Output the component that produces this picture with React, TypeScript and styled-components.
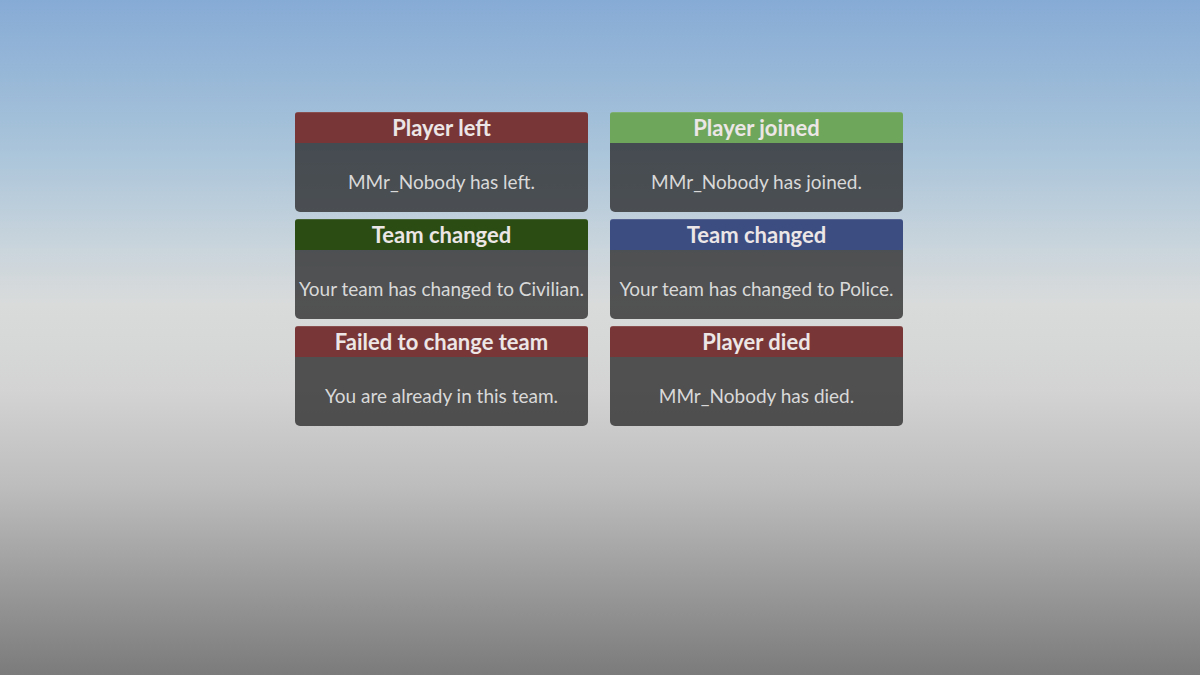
import styled, { createGlobalStyle } from "styled-components";

type Notice = {
  title: string;
  message: string;
  tone: string;
};

type headerProps = {
  tone: string;
};

const notices: Notice[] = [
  { title: "Player left", message: "MMr_Nobody has left.", tone: "#793636" },
  { title: "Player joined", message: "MMr_Nobody has joined.", tone: "#6ea65c" },
  { title: "Team changed", message: "Your team has changed to Civilian.", tone: "#2b4d13" },
  { title: "Team changed", message: "Your team has changed to Police.", tone: "#3c4d82" },
  { title: "Failed to change team", message: "You are already in this team.", tone: "#793636" },
  { title: "Player died", message: "MMr_Nobody has died.", tone: "#793636" },
];

const GlobalStyle = createGlobalStyle`
  html, body {
    margin: 0;
    height: 100%;
  }
  body {
    font-family: Lato, "Noto Sans", sans-serif;
    background: linear-gradient(
      to bottom,
      #86abd5 0%,
      #a9c4da 22%,
      #c8d4dc 36%,
      #d9dbdb 45%,
      #d3d3d3 58%,
      #bdbdbd 72%,
      #9c9c9c 86%,
      #7b7b7b 100%
    );
  }
  #root {
    height: 100%;
  }
`;

const App = () => {
  return (
    <>
      <GlobalStyle />
      <Screen>
        <Grid>
          {notices.map((n, i) => (
            <Card key={i}>
              <Header tone={n.tone}>{n.title}</Header>
              <Body>{n.message}</Body>
            </Card>
          ))}
        </Grid>
      </Screen>
    </>
  );
};

export default App;

const Screen = styled.div`
  height: 100%;
  display: flex;
  justify-content: center;
  padding: 112px 2px 0 0;
  box-sizing: border-box;
`;

const Grid = styled.div`
  display: grid;
  grid-template-columns: 293px 293px;
  column-gap: 22px;
  row-gap: 7px;
  align-content: start;
`;

const Card = styled.div`
  display: flex;
  flex-direction: column;
  height: 100px;
  border-radius: 3px 3px 5px 5px;
  overflow: hidden;
`;

const Header = styled.div<headerProps>`
  height: 31px;
  background: ${(props) => props.tone};
  color: #ece6e6;
  font-weight: 700;
  font-size: 22px;
  display: flex;
  align-items: center;
  justify-content: center;
  box-shadow: inset 0 1px 0 rgba(255, 255, 255, 0.12);
`;

const Body = styled.div`
  flex: 1;
  background: rgba(38, 38, 38, 0.76);
  color: #d9d9d9;
  font-size: 19px;
  padding-top: 8px;
  display: flex;
  align-items: center;
  justify-content: center;
  white-space: nowrap;
`;
